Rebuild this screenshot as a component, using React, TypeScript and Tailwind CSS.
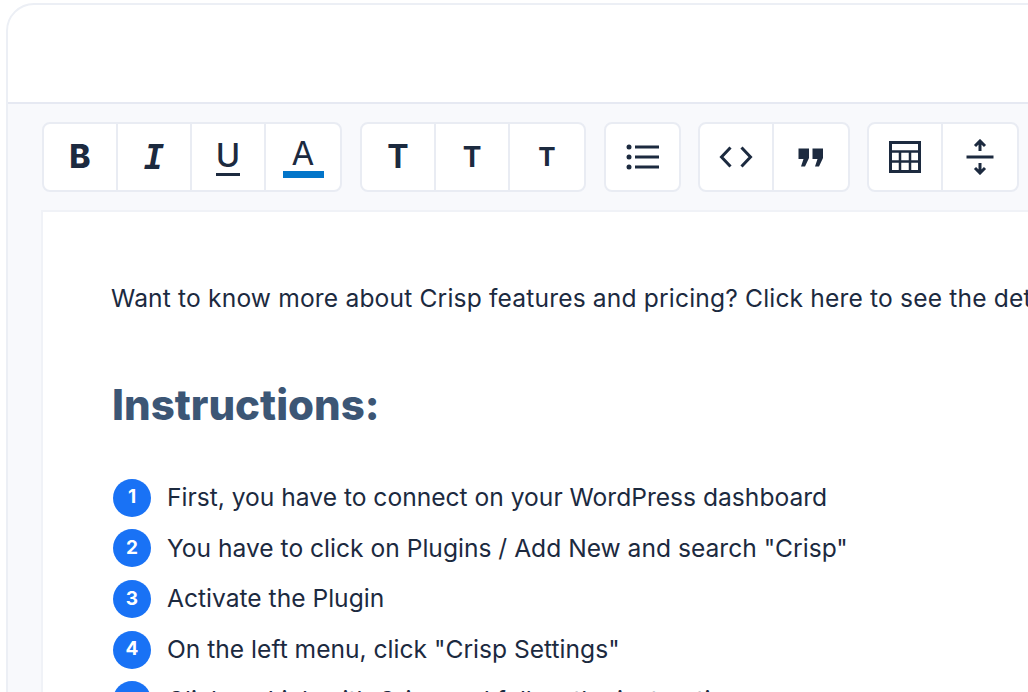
const steps = [
  "First, you have to connect on your WordPress dashboard",
  'You have to click on Plugins / Add New and search "Crisp"',
  "Activate the Plugin",
  'On the left menu, click "Crisp Settings"',
  "Click on Link with Crisp and follow the instructions",
];

function Btn({ children, last, narrow }: { children: React.ReactNode; last?: boolean; narrow?: boolean }) {
  return (
    <div className={`h-full flex items-center justify-center ${narrow ? "w-[73px]" : "w-[74px]"} ${last ? "" : "border-r-2 border-[#e9ecf3]"}`}>
      {children}
    </div>
  );
}

function Group({ children, className }: { children: React.ReactNode; className?: string }) {
  return (
    <div className={`h-[70px] flex shrink-0 bg-white border-2 border-[#e9ecf3] rounded-[8px] text-[#1c2a3f] ${className ?? ""}`}>
      {children}
    </div>
  );
}

export default function App() {
  return (
    <div className="w-[1028px] h-[692px] overflow-hidden bg-white font-['Inter',sans-serif]">
      <div className="ml-[6px] mt-[3px] w-[1100px] h-[800px] bg-white border-2 border-[#eceff5] rounded-tl-[28px]">
        <div className="h-[99px] border-b-2 border-[#e6e9f2]" />
        <div className="bg-[#f8f9fc] h-[700px] pl-[34px]">
          <div className="flex gap-[18px] pt-[18px]">
            <Group>
              <Btn><span className="font-extrabold text-[32px] leading-none">B</span></Btn>
              <Btn><span className="font-['DejaVu_Sans_Mono',monospace] font-bold italic text-[34px] leading-none">I</span></Btn>
              <Btn>
                <div className="flex flex-col items-center">
                  <span className="font-medium text-[33px] leading-[32px]">U</span>
                  <div className="w-6 h-[3px] bg-[#1c2a3f] mt-[2px]" />
                </div>
              </Btn>
              <Btn last>
                <div className="flex flex-col items-center pt-[2px]">
                  <span className="font-normal text-[33px] leading-[30px]">A</span>
                  <div className="w-[41px] h-[7px] bg-[#0375c9] mt-[3px]" />
                </div>
              </Btn>
            </Group>
            <Group>
              <Btn><span className="font-bold text-[32px] leading-none">T</span></Btn>
              <Btn><span className="font-bold text-[28px] leading-none">T</span></Btn>
              <Btn last><span className="font-bold text-[26px] leading-none">T</span></Btn>
            </Group>
            <Group>
              <Btn last narrow>
                <svg width="34" height="26" viewBox="0 0 34 26" fill="#1c2a3f">
                  <circle cx="3" cy="3" r="2.5" />
                  <circle cx="3" cy="13" r="2.5" />
                  <circle cx="3" cy="23" r="2.5" />
                  <rect x="9" y="1.5" width="24" height="3" />
                  <rect x="9" y="11.5" width="24" height="3" />
                  <rect x="9" y="21.5" width="24" height="3" />
                </svg>
              </Btn>
            </Group>
            <Group className="-ml-px">
              <Btn>
                <svg width="34" height="22" viewBox="0 0 34 22" fill="none" stroke="#1c2a3f" strokeWidth="3">
                  <path d="M11.5 1.5 L2.5 11 L11.5 20.5" />
                  <path d="M22.5 1.5 L31.5 11 L22.5 20.5" />
                </svg>
              </Btn>
              <Btn last>
                <svg width="26" height="19" viewBox="0 0 26 19" fill="#1c2a3f">
                  <path d="M0.5 0.5 H11 V10 L7 18.5 H3 L5.5 11 H0.5 Z" />
                  <path d="M14.5 0.5 H25 V10 L21 18.5 H17 L19.5 11 H14.5 Z" />
                </svg>
              </Btn>
            </Group>
            <Group className="-ml-px">
              <Btn>
                <svg width="32" height="32" viewBox="0 0 32 32" fill="none" stroke="#1c2a3f" strokeWidth="2.5">
                  <rect x="1.5" y="1.5" width="29" height="29" strokeWidth="3" />
                  <path d="M1 10.5 H31 M1 20.5 H31 M11 10.5 V31 M21 10.5 V31" />
                </svg>
              </Btn>
              <Btn last>
                <svg width="28" height="36" viewBox="0 0 28 36" fill="none" stroke="#1c2a3f" strokeWidth="3">
                  <path d="M0.5 18 H27.5" />
                  <path d="M14 12 V2 M9 7 L14 2 L19 7" />
                  <path d="M14 24 V34 M9 29 L14 34 L19 29" />
                </svg>
              </Btn>
            </Group>
          </div>
          <div className="mt-[18px] bg-white border-2 border-[#f0f2f7] h-[600px] -ml-px pl-[69px] pt-[70px]">
            <p className="-ml-px text-[24.6px] tracking-[0.16px] leading-[32px] text-[#1c2a3f] whitespace-nowrap">
              Want to know more about Crisp features and pricing? Click here to see the details
            </p>
            <h2 className="mt-[63px] text-[42px] leading-[56px] font-extrabold text-[#3c5675]">Instructions:</h2>
            <div className="mt-[45.5px] ml-px flex flex-col gap-[12.7px]">
              {steps.map((text, i) => (
                <div key={i} className="flex items-center h-[38px] whitespace-nowrap">
                  <div className="w-[38px] h-[38px] rounded-full bg-[#1972f5] flex items-center justify-center text-white text-[19px] font-bold">
                    {i + 1}
                  </div>
                  <span className="ml-[16px] text-[24.6px] text-[#1c2a3f]">{text}</span>
                </div>
              ))}
            </div>
          </div>
        </div>
      </div>
    </div>
  );
}
